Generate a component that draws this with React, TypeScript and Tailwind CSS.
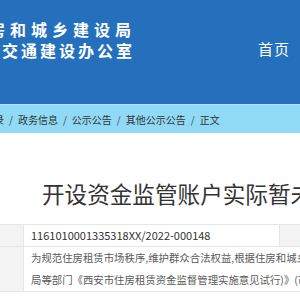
const crumbs = ["录", "政务信息", "公示公告", "其他公示公告", "正文"];

const cjk = { fontFamily: '"Noto Sans CJK SC", "Noto Sans", sans-serif' };

export default function App() {
  return (
    <div className="h-[300px] w-[300px] overflow-hidden bg-white" style={cjk}>
      {/* 顶部蓝色标题栏 */}
      <header className="flex h-[104px] items-start justify-between bg-[#2470bd] pt-[19px] text-white">
        <div className="flex flex-col">
          <span className="ml-[-11px] whitespace-nowrap text-[16px] font-bold leading-[20px] tracking-[5px]">
            房和城乡建设局
          </span>
          <span className="ml-[2px] mt-[1px] whitespace-nowrap text-[16px] font-bold leading-[20px] tracking-[3px]">
            交通建设办公室
          </span>
        </div>
        <span className="mr-[10px] mt-[20px] text-[15px] leading-[20px] tracking-[1px]">首页</span>
      </header>

      {/* 面包屑 */}
      <nav className="flex h-[29px] items-center whitespace-nowrap border-t border-[#a9e4f8] bg-[#90daf5] text-[10px] text-[#333]">
        {crumbs.map((c, i) => (
          <span key={i} className={i === 0 ? "ml-[-6px] flex items-center" : "flex items-center"}>
            {i > 0 && <span className="mx-[5px] text-[#444]">/</span>}
            {c}
          </span>
        ))}
      </nav>

      {/* 标题 */}
      <h1 className="ml-[42px] mt-[46px] whitespace-nowrap text-[22.6px] leading-[30px] text-[#333]">
        开设资金监管账户实际暂未使用的说明
      </h1>

      {/* 信息表格 */}
      <div className="mt-[15px] border-t border-b border-[#e6e6e6]">
        <div className="flex h-[22px] border-b border-[#e6e6e6]">
          <div className="w-[24px] shrink-0 border-r border-[#e6e6e6] bg-[#f3f3f3]" />
          <div className="flex flex-1 items-center whitespace-nowrap pl-[7px] text-[11px] text-[#333]">
            1161010001335318XX/2022-000148
          </div>
          <div className="w-[21px] shrink-0 border-l border-[#e6e6e6] bg-[#f3f3f3]" />
        </div>
        <div className="flex">
          <div className="w-[24px] shrink-0 border-r border-[#e6e6e6] bg-[#f3f3f3]" />
          <div className="flex flex-col whitespace-nowrap pl-[7px] text-[10.4px] leading-[22px] text-[#5a5a5a]">
            <span>为规范住房租赁市场秩序,维护群众合法权益,根据住房和城乡建设部</span>
            <span>局等部门《西安市住房租赁资金监督管理实施意见试行)》(市建发</span>
          </div>
        </div>
      </div>
    </div>
  );
}
